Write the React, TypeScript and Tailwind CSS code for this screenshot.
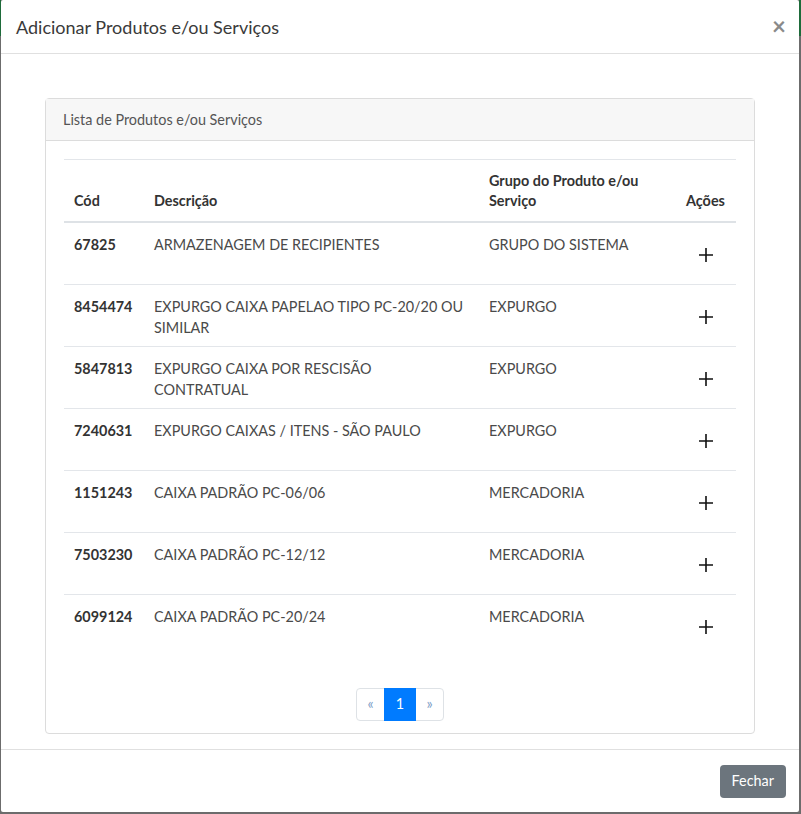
import React from "react";

const rows = [
  { cod: "67825", desc: "ARMAZENAGEM DE RECIPIENTES", grupo: "GRUPO DO SISTEMA" },
  { cod: "8454474", desc: "EXPURGO CAIXA PAPELAO TIPO PC-20/20 OU SIMILAR", grupo: "EXPURGO" },
  { cod: "5847813", desc: "EXPURGO CAIXA POR RESCISÃO CONTRATUAL", grupo: "EXPURGO" },
  { cod: "7240631", desc: "EXPURGO CAIXAS / ITENS - SÃO PAULO", grupo: "EXPURGO" },
  { cod: "1151243", desc: "CAIXA PADRÃO PC-06/06", grupo: "MERCADORIA" },
  { cod: "7503230", desc: "CAIXA PADRÃO PC-12/12", grupo: "MERCADORIA" },
  { cod: "6099124", desc: "CAIXA PADRÃO PC-20/24", grupo: "MERCADORIA" },
];

function Plus() {
  return (
    <svg width="16" height="16" viewBox="0 0 16 16" className="block">
      <path d="M8 1v14M1 8h14" stroke="#111" strokeWidth="1.6" fill="none" />
    </svg>
  );
}

export default function App() {
  return (
    <div
      className="relative w-[801px] h-[814px] bg-[#6c6c6c] overflow-hidden"
      style={{ fontFamily: "Lato, 'Open Sans', sans-serif" }}
    >
      <div className="absolute left-0 top-0 w-[1px] h-[36px] bg-[#1e6b3a]" />
      <div className="absolute right-0 top-0 w-[2px] h-[36px] bg-[#1e6b3a]" />
      <div className="ml-[1px] w-[798px] h-[812px] bg-white flex flex-col rounded-[2px]">
        {/* header */}
        <div className="h-[54px] shrink-0 flex items-center justify-between pl-[15px] pr-[15px] border-b border-[#e0e0e0]">
          <div className="text-[18px] text-[#3a3a3a] leading-none">Adicionar Produtos e/ou Serviços</div>
          <div className="text-[24px] font-bold text-[#8a8a8a] leading-none mt-[-2px] mr-[-2px]">×</div>
        </div>
        {/* body */}
        <div className="flex-1 px-[44px] pt-[44px] pb-[15px]">
          <div className="border border-[#dcdcdc] rounded-[4px] h-full flex flex-col">
            <div className="h-[42px] bg-[#f7f7f7] border-b border-[#dcdcdc] flex items-center px-[17px] text-[14.4px] text-[#555]">
              Lista de Produtos e/ou Serviços
            </div>
            <div className="px-[18px] pt-[18px]">
              <table className="w-full border-collapse text-[14.4px]">
                <thead>
                  <tr className="border-t border-[#e3e6ea] border-b-2 border-b-[#dee2e6]">
                    <th className="w-[80px] h-[62px] align-bottom text-left font-bold text-[#333] px-[10px] pb-[10px] leading-[20px]">Cód</th>
                    <th className="w-[335px] align-bottom text-left font-bold text-[#333] px-[10px] pb-[10px] leading-[20px]">Descrição</th>
                    <th className="w-[197px] align-bottom text-left font-bold text-[#333] px-[10px] pb-[10px] leading-[20px]">Grupo do Produto e/ou Serviço</th>
                    <th className="align-bottom text-left font-bold text-[#333] px-[10px] pb-[10px] leading-[20px]">Ações</th>
                  </tr>
                </thead>
                <tbody>
                  {rows.map((r, i) => (
                    <tr key={r.cod} className={i > 0 ? "border-t border-[#e3e6ea]" : ""}>
                      <td className="align-top px-[10px] pt-[11px] font-bold text-[#333] leading-[21px]">{r.cod}</td>
                      <td className="align-top px-[10px] pt-[11px] text-[#4a4a4a] leading-[21px]">{r.desc}</td>
                      <td className="align-top px-[10px] pt-[11px] text-[#4a4a4a] leading-[21px]">{r.grupo}</td>
                      <td className="align-top px-[10px] pt-[14px] pb-[10px]">
                        <div className="h-[37px] flex items-center justify-center">
                          <Plus />
                        </div>
                      </td>
                    </tr>
                  ))}
                </tbody>
              </table>
              <div className="flex justify-center mt-[32px]">
                <div className="flex h-[33px] border border-[#dee2e6] rounded-[4px] text-[14.4px]">
                  <div className="w-[27px] flex items-center justify-center text-[#7a9cc6]">«</div>
                  <div className="w-[32px] flex items-center justify-center bg-[#007bff] text-white -my-[1px]">1</div>
                  <div className="w-[27px] flex items-center justify-center text-[#7a9cc6]">»</div>
                </div>
              </div>
            </div>
          </div>
        </div>
        {/* footer */}
        <div className="h-[63px] shrink-0 border-t border-[#e0e0e0] flex items-center justify-end pr-[13px]">
          <div className="h-[33px] px-[12px] rounded-[4px] bg-[#6c757d] text-white text-[14.4px] flex items-center">Fechar</div>
        </div>
      </div>
    </div>
  );
}
